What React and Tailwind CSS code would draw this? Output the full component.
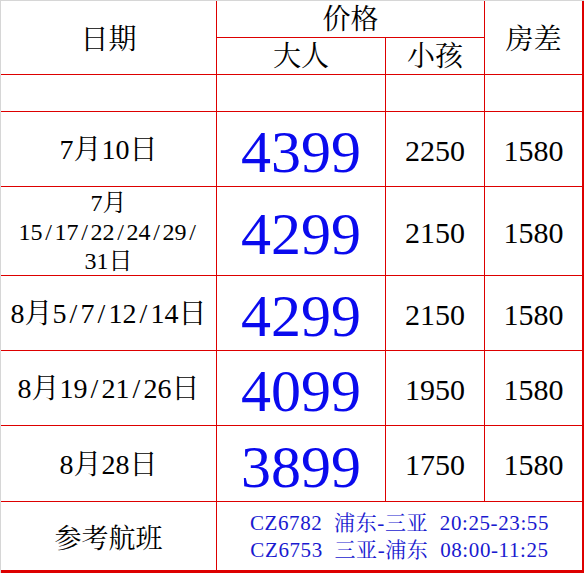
const rows = [
  { date: '7月10日', adult: '4399', child: '2250', room: '1580', h: 'h-[75px]' },
  { date: ['7月', '15/17/22/24/29/', '31日'], adult: '4299', child: '2150', room: '1580', h: 'h-[89px]' },
  { date: '8月5/7/12/14日', adult: '4299', child: '2150', room: '1580', h: 'h-[75px]' },
  { date: '8月19/21/26日', adult: '4099', child: '1950', room: '1580', h: 'h-[75px]' },
  { date: '8月28日', adult: '3899', child: '1750', room: '1580', h: 'h-[76px]' },
]

const cell = 'flex items-center justify-center border-r border-b border-[#dd0000] text-black'

// slashes in the original are half-width, wider than Times' slash
function DateText({ text }) {
  return text.split(/(\/)/).map((part, i) =>
    part === '/' ? (
      <span key={i} className="inline-block w-[0.5em] text-center">/</span>
    ) : (
      <span key={i}>{part}</span>
    )
  )
}

function PriceRow({ row }) {
  return (
    <>
      <div className={`${cell} ${row.h}`}>
        {Array.isArray(row.date) ? (
          <div className="flex flex-col items-center pt-[2px] text-[24px] leading-[29px]">
            {row.date.map((line) => (
              <span key={line}>
                <DateText text={line} />
              </span>
            ))}
          </div>
        ) : (
          <span className="pt-[2px] text-[28px]">
            <DateText text={row.date} />
          </span>
        )}
      </div>
      <div className={`${cell} ${row.h}`}>
        <span className="pt-[6px] text-[60px] leading-none text-[#0a0aee]">{row.adult}</span>
      </div>
      <div className={`${cell} ${row.h}`}>
        <span className="pt-[2px] text-[30px]">{row.child}</span>
      </div>
      <div className={`${cell} ${row.h} border-r-2`}>
        <span className="pt-[2px] text-[30px]">{row.room}</span>
      </div>
    </>
  )
}

export default function App() {
  return (
    <div className="h-[573px] w-[584px] overflow-hidden border-l border-t border-[#d6d6d6] bg-white font-['Liberation_Serif','Noto_Serif_CJK_SC','Noto_Sans_CJK_SC',serif]">
      <div className="grid grid-cols-[216px_169px_99px_99px]">
        {/* header */}
        <div className={`${cell} row-span-2 h-[74px] pt-[5px] text-[28px]`}>日期</div>
        <div className={`${cell} col-span-2 h-[37px] pt-[2px] text-[28px]`}>价格</div>
        <div className={`${cell} row-span-2 h-[74px] border-r-2 pt-[5px] text-[28px]`}>房差</div>
        <div className={`${cell} h-[37px] pt-[2px] text-[28px]`}>大人</div>
        <div className={`${cell} h-[37px] pt-[2px] text-[28px]`}>小孩</div>

        {/* empty row */}
        <div className={`${cell} h-[37px]`} />
        <div className={`${cell} h-[37px]`} />
        <div className={`${cell} h-[37px]`} />
        <div className={`${cell} h-[37px] border-r-2`} />

        {rows.map((row, i) => (
          <PriceRow key={i} row={row} />
        ))}

        {/* flights */}
        <div className={`${cell} h-[71px] border-b-[3px] pt-[6px] text-[27px]`}>参考航班</div>
        <div className={`${cell} col-span-3 h-[71px] border-r-2 border-b-[3px]`}>
          <div className="flex flex-col items-center pt-[2px] text-[21px] leading-[27px] tracking-[0.6px] text-[#1a1ad0]">
            <span>CZ6782&nbsp; 浦东-三亚&nbsp; 20:25-23:55</span>
            <span>CZ6753&nbsp; 三亚-浦东&nbsp; 08:00-11:25</span>
          </div>
        </div>
      </div>
    </div>
  )
}
